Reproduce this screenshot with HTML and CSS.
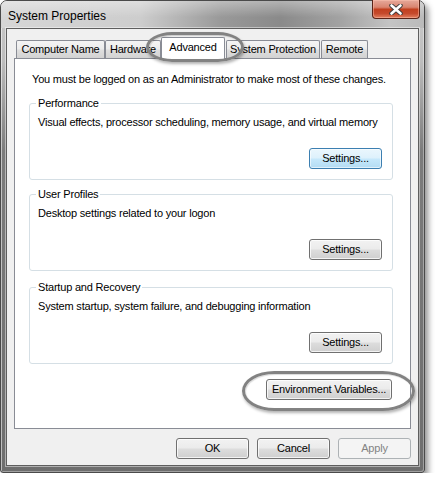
FILE: index.html
```html
<!DOCTYPE html>
<html>
<head>
<meta charset="utf-8">
<title>System Properties</title>
<link rel="stylesheet" href="styles.css">
</head>
<body>
<div class="window">
  <div class="titlebar">
    <span class="title">System Properties</span>
    <div class="close">
      <svg width="14" height="11" viewBox="0 0 14 11"><path d="M2.5 1.5 L11.5 9.5 M11.5 1.5 L2.5 9.5" stroke="#3a3a3a" stroke-width="4.4" stroke-linecap="round"/><path d="M2.5 1.5 L11.5 9.5 M11.5 1.5 L2.5 9.5" stroke="#ffffff" stroke-width="2.6" stroke-linecap="round"/></svg>
    </div>
  </div>
  <div class="client">
    <div class="tabs">
      <div class="tab w-cn">Computer Name</div>
      <div class="tab w-hw">Hardware</div>
      <div class="tab selected w-adv">Advanced<span class="oval oval-tab"></span></div>
      <div class="tab w-sp">System Protection</div>
      <div class="tab w-rm">Remote</div>
    </div>
    <div class="panel">
      <p class="note">You must be logged on as an Administrator to make most of these changes.</p>
      <section class="group g1">
        <div class="legend"><span>Performance</span></div>
        <p class="desc">Visual effects, processor scheduling, memory usage, and virtual memory</p>
        <div class="actions"><button class="btn default">Settings...</button></div>
      </section>
      <section class="group g2">
        <div class="legend"><span>User Profiles</span></div>
        <p class="desc">Desktop settings related to your logon</p>
        <div class="actions"><button class="btn">Settings...</button></div>
      </section>
      <section class="group g3">
        <div class="legend"><span>Startup and Recovery</span></div>
        <p class="desc">System startup, system failure, and debugging information</p>
        <div class="actions"><button class="btn">Settings...</button></div>
      </section>
      <div class="env-row">
        <button class="btn env">Environment Variables...<span class="oval oval-env"></span></button>
      </div>
    </div>
    <div class="footer">
      <button class="btn">OK</button>
      <button class="btn">Cancel</button>
      <button class="btn disabled">Apply</button>
    </div>
  </div>
</div>
</body>
</html>
```

FILE: styles.css
```css
html, body {
  margin: 0;
  padding: 0;
  background: #ffffff;
}

body {
  font-family: "Liberation Sans", Arial, sans-serif;
  font-size: 11px;
  letter-spacing: -0.2px;
  color: #000;
}

.window {
  width: 425px;
  height: 473px;
  box-sizing: border-box;
  border: 1px solid #4a4a4a;
  border-radius: 7px 7px 3px 3px;
  background: linear-gradient(to bottom, #cbcbcb 0, #bdbdbd 60px, #7c7c7c 150px, #6e6e6e 100%);
  box-shadow: 3px 4px 6px rgba(0, 0, 0, 0.45), inset 1px 1px 0 rgba(255, 255, 255, 0.55), inset -1px -1px 0 rgba(255, 255, 255, 0.35);
  display: flex;
  flex-direction: column;
}

.titlebar {
  height: 27px;
  display: flex;
  align-items: flex-start;
  border-radius: 6px 6px 0 0;
  background:
    linear-gradient(to bottom, rgba(255, 255, 255, 0.35), rgba(255, 255, 255, 0) 60%),
    linear-gradient(to right, #d6d6d6 0, #cdcdcd 33%, #999 52%, #8a8a8a 66%, #a2a2a2 80%, #c4c4c4 92%, #bababa 100%);
}

.title {
  padding: 8px 0 0 7px;
  font-size: 12px;
  letter-spacing: 0;
  line-height: 15px;
}

.close {
  margin-left: auto;
  margin-right: 4px;
  margin-top: -1px;
  width: 46px;
  height: 18px;
  border: 1px solid #5a2418;
  border-top: none;
  border-radius: 0 0 4px 4px;
  background: linear-gradient(to bottom, #e6a99b 0%, #d98570 40%, #c2401f 52%, #c54a2c 75%, #e27f5f 100%);
  box-shadow: inset 0 0 0 1px rgba(255, 200, 180, 0.45);
  display: flex;
  align-items: center;
  justify-content: center;
}

.client {
  margin: 0 5px 0 5px;
  height: 438px;
  box-sizing: border-box;
  border: 1px solid #5e5e5e;
  background: #f0f0f0;
  padding: 8px 7px 6px 7px;
  display: flex;
  flex-direction: column;
  box-shadow: 0 0 0 1px rgba(255, 255, 255, 0.45);
}

.tabs {
  display: flex;
  height: 21px;
  padding-left: 2px;
  position: relative;
  z-index: 2;
}

.tab {
  box-sizing: border-box;
  height: 18px;
  margin-top: 3px;
  border: 1px solid #898c95;
  border-bottom: none;
  border-radius: 2px 2px 0 0;
  background: linear-gradient(to bottom, #f4f4f4 0%, #ececec 45%, #dedede 55%, #d2d2d2 100%);
  text-align: center;
  line-height: 17px;
  white-space: nowrap;
}

.tab.selected {
  position: relative;
  height: 22px;
  margin-top: 0;
  background: #ffffff;
  line-height: 19px;
}

.w-cn { width: 89px; }
.w-hw { width: 56px; }
.w-adv { width: 64px; }
.w-sp { width: 94px; margin-left: 1px; }
.w-rm { width: 47px; margin-left: 1px; }

.oval {
  position: absolute;
  border: 3px solid #828282;
  box-shadow: 1px 2px 3px rgba(0, 0, 0, 0.3), inset 1px 1px 1px rgba(0, 0, 0, 0.15);
  pointer-events: none;
  z-index: 5;
}

.oval-tab {
  left: -16px;
  right: -20px;
  top: -6px;
  bottom: -3px;
  border-radius: 26px / 15px;
}

.oval-env {
  left: -25px;
  right: -24px;
  top: -9px;
  bottom: -12px;
  border-radius: 34px / 21px;
}

.panel {
  height: 371px;
  box-sizing: border-box;
  border: 1px solid #898c95;
  background: #ffffff;
  padding: 14px 17px 0 14px;
  display: flex;
  flex-direction: column;
  position: relative;
  z-index: 1;
}

.note {
  margin: 0 0 0 3px;
  line-height: 13px;
}

.group {
  height: 77px;
  box-sizing: border-box;
  border: 1px solid #d5dfe5;
  border-radius: 3px;
  padding: 0 10px 10px 8px;
  display: flex;
  flex-direction: column;
}

.g1 { margin-top: 17px; }
.g2 { margin-top: 14px; }
.g3 { margin-top: 16px; }

.legend {
  margin-top: -7px;
  line-height: 13px;
  height: 13px;
}

.legend span {
  background: #ffffff;
  margin-left: -2px;
  padding: 0 2px;
}

.desc {
  margin: 6px 0 0 0;
  line-height: 13px;
}

.actions {
  margin-top: auto;
  display: flex;
  justify-content: flex-end;
}

.btn {
  box-sizing: border-box;
  width: 73px;
  height: 21px;
  padding: 0;
  border: 1px solid #707070;
  border-radius: 3px;
  background: linear-gradient(to bottom, #f2f2f2 0%, #ebebeb 48%, #dddddd 52%, #cfcfcf 100%);
  box-shadow: inset 0 0 0 1px rgba(255, 255, 255, 0.75);
  font-family: "Liberation Sans", Arial, sans-serif;
  font-size: 11px;
  letter-spacing: -0.2px;
  color: #000;
  line-height: 19px;
  text-align: center;
}

.btn.default {
  border-color: #3c7fb1;
  background: linear-gradient(to bottom, #eaf6fd 0%, #ddf1fc 48%, #c6e8fb 52%, #b3dcf3 100%);
  box-shadow: inset 0 0 0 1px rgba(255, 255, 255, 0.6);
}

.btn.disabled {
  border-color: #adb2b5;
  background: #f4f4f4;
  color: #838383;
  box-shadow: none;
}

.env-row {
  margin-top: 15px;
  display: flex;
  justify-content: flex-end;
  padding-right: 1px;
}

.btn.env {
  width: 126px;
  position: relative;
}

.footer {
  margin-top: 9px;
  display: flex;
  justify-content: flex-end;
  gap: 8px;
}
```
